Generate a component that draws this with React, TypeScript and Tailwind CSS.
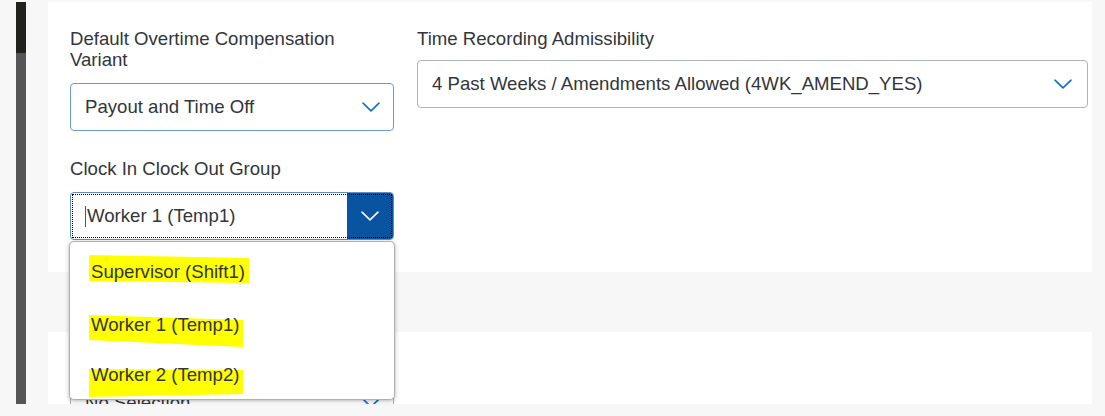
import React from "react";

const font = { fontFamily: '"Liberation Sans", Arial, sans-serif' };

function Chevron({ color = "#0a6ed1", width = 18 }: { color?: string; width?: number }) {
  return (
    <svg width={width} height="10" viewBox="0 0 18 10" fill="none">
      <path d="M1 1.2 L9 8.8 L17 1.2" stroke={color} strokeWidth="1.6" strokeLinecap="round" strokeLinejoin="round" />
    </svg>
  );
}

function Highlight({ text, pts, className }: { text: string; pts: string; className: string }) {
  return (
    <div className={`relative h-[21px] w-fit leading-[21px] ${className}`}>
      <svg
        className="absolute left-[-2px] top-[-6px] h-[40px] w-[calc(100%+6px)]"
        viewBox="0 0 100 40"
        preserveAspectRatio="none"
      >
        <polygon points={pts} fill="#ffff00" />
      </svg>
      <span className="relative block whitespace-nowrap text-[#32363a]">{text}</span>
    </div>
  );
}

export default function App() {
  return (
    <div
      className="relative flex h-[416px] w-[1105px] overflow-hidden bg-[#f7f7f7] text-[18.6px] text-[#32363a]"
      style={font}
    >
      {/* left dark bar */}
      <div className="ml-[16px] mt-[2px] flex h-[402px] w-[10px] flex-col">
        <div className="h-[51px] bg-[#21211d]" />
        <div className="flex-1 bg-[#555555]" />
      </div>

      {/* content */}
      <div className="ml-[22px] flex w-[1044px] flex-col">
        {/* panel 1 */}
        <div className="relative z-10 mt-[2px] h-[270px] bg-white pl-[22px] pt-[26px]">
          <div className="flex gap-[23px]">
            {/* left column */}
            <div className="flex w-[324px] flex-col">
              <div className="mb-[13px] leading-[21px]">
                Default Overtime Compensation
                <br />
                Variant
              </div>
              <div className="flex h-[48px] items-center justify-between rounded-[4px] border border-[#6a9bd4] pl-[14px] pr-[13px]">
                <span>Payout and Time Off</span>
                <Chevron />
              </div>

              <div className="mb-[13px] mt-[27px] leading-[21px]">Clock In Clock Out Group</div>
              <div className="relative h-[48px]">
                <div className="flex h-[48px] overflow-hidden rounded-[4px] border border-[#5b8dcb]">
                  <div className="flex flex-1 items-center pl-[14px]">
                    <span className="mr-[1px] inline-block h-[21px] w-[1px] bg-[#555]" />
                    <span>Worker 1 (Temp1)</span>
                  </div>
                  <div className="flex w-[46px] items-center justify-center bg-[#0854a0]">
                    <Chevron color="#ffffff" />
                  </div>
                </div>
                <div className="pointer-events-none absolute inset-[2px] border border-dotted border-black" />

                {/* dropdown */}
                <div className="absolute left-[-1px] top-[49px] z-20 flex h-[159px] w-[326px] flex-col rounded-[5px] border border-[#b0b0b0] bg-white pl-[21px] pt-[19px] shadow-[0_1px_4px_rgba(0,0,0,0.3)]">
                  <Highlight text="Supervisor (Shift1)" pts="0,0 100,3 100,28 0,26" className="" />
                  <Highlight text="Worker 1 (Temp1)" pts="0,7 100,12 100,39 0,32" className="mt-[32px]" />
                  <Highlight text="Worker 2 (Temp2)" pts="0,11 100,12 100,36 0,39" className="mt-[29px]" />
                </div>
              </div>
            </div>

            {/* right column */}
            <div className="flex w-[671px] flex-col">
              <div className="mb-[11px] leading-[21px]">Time Recording Admissibility</div>
              <div className="flex h-[48px] items-center justify-between rounded-[4px] border border-[#aab3bd] pl-[14px] pr-[15px]">
                <span>4 Past Weeks / Amendments Allowed (4WK_AMEND_YES)</span>
                <Chevron />
              </div>
            </div>
          </div>
        </div>

        {/* panel 2 */}
        <div className="mt-[60px] h-[72px] overflow-hidden bg-white pl-[22px] pt-[47px]">
          <div className="flex h-[48px] w-[324px] items-center justify-between rounded-[4px] border border-[#aab3bd] pl-[14px] pr-[13px]">
            <span>No Selection</span>
            <Chevron />
          </div>
        </div>
      </div>
    </div>
  );
}
